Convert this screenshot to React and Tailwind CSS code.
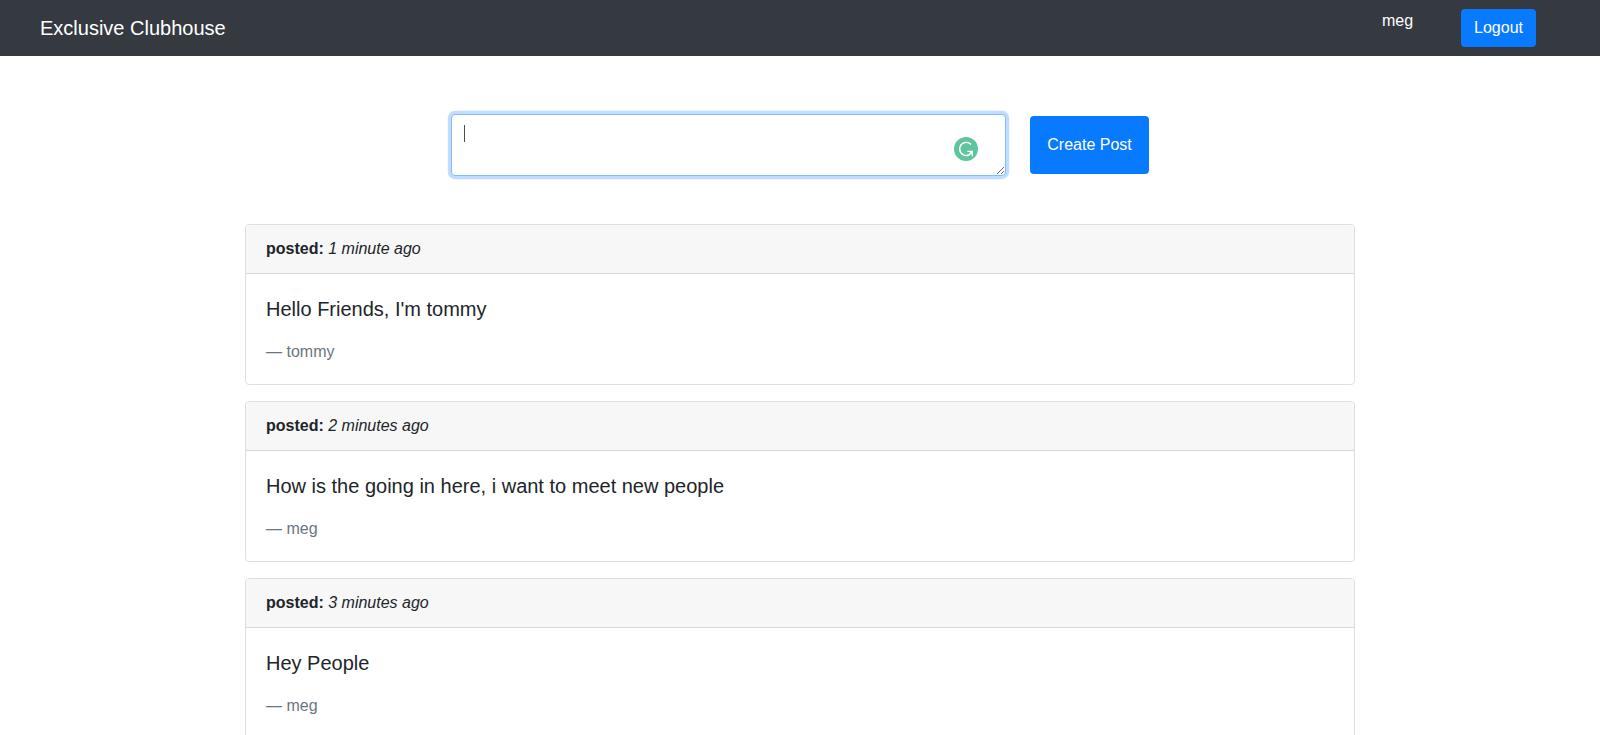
const posts = [
  { id: 1, time: "1 minute ago", text: "Hello Friends, I'm tommy", author: "tommy" },
  { id: 2, time: "2 minutes ago", text: "How is the going in here, i want to meet new people", author: "meg" },
  { id: 3, time: "3 minutes ago", text: "Hey People", author: "meg" },
];

function Navbar() {
  return (
    <nav className="flex h-14 items-center justify-between bg-[#343a40] pr-16 pl-10 text-white">
      <a className="text-xl leading-[30px]">Exclusive Clubhouse</a>
      <div className="flex items-start">
        <span className="mr-12 leading-6">meg</span>
        <button className="h-[38px] rounded bg-[#087aff] px-[13px] leading-6">Logout</button>
      </div>
    </nav>
  );
}

function WritingBadge() {
  return (
    <svg className="absolute top-[23px] left-[503px]" width="24" height="24" viewBox="0 0 24 24" fill="none">
      <circle cx="12" cy="12" r="12" fill="#60c49c" />
      <path
        d="M17 7.4A6.6 6.6 0 1 0 12 18.6C14.6 18.6 16.3 17.2 17.8 15"
        stroke="#fff"
        strokeWidth="1.4"
      />
      <path d="M13.4 13.7H19V19.2H17.6V16.4L15.6 15.1H13.4Z" fill="#fff" />
    </svg>
  );
}

function PostForm() {
  return (
    <form className="mt-[58px] flex items-center justify-center">
      <div className="relative h-[62px] w-[555px]">
        <textarea
          rows={2}
          className="block h-full w-full rounded border border-[#80bdff] bg-white px-3 py-1.5 leading-6 text-[#495057] shadow-[0_0_0_3.2px_rgba(0,123,255,0.25)] outline-none"
        />
        <span className="absolute top-[11px] left-[13px] h-[17px] w-px bg-[#495057]" />
        <WritingBadge />
      </div>
      <button type="button" className="ml-6 h-[58px] w-[119px] rounded bg-[#087aff] leading-6 text-white">
        Create Post
      </button>
    </form>
  );
}

function PostCard({ post }) {
  return (
    <article className="rounded border border-[#dfdfdf]">
      <header className="rounded-t-[3px] border-b border-[#d8d8d8] bg-[#f7f7f7] px-5 py-3 leading-6">
        <strong>posted:</strong> <em>{post.time}</em>
      </header>
      <blockquote className="p-5">
        <p className="mb-4 text-xl leading-[30px]">{post.text}</p>
        <footer className="leading-6 text-[#6c757d]">— {post.author}</footer>
      </blockquote>
    </article>
  );
}

export default function App() {
  return (
    <div className="h-screen overflow-hidden bg-white font-['Liberation_Sans',Arial,sans-serif] text-base text-[#212529]">
      <Navbar />
      <PostForm />
      <main className="mx-auto mt-12 flex w-[1110px] flex-col gap-4">
        {posts.map((post) => (
          <PostCard key={post.id} post={post} />
        ))}
      </main>
    </div>
  );
}
